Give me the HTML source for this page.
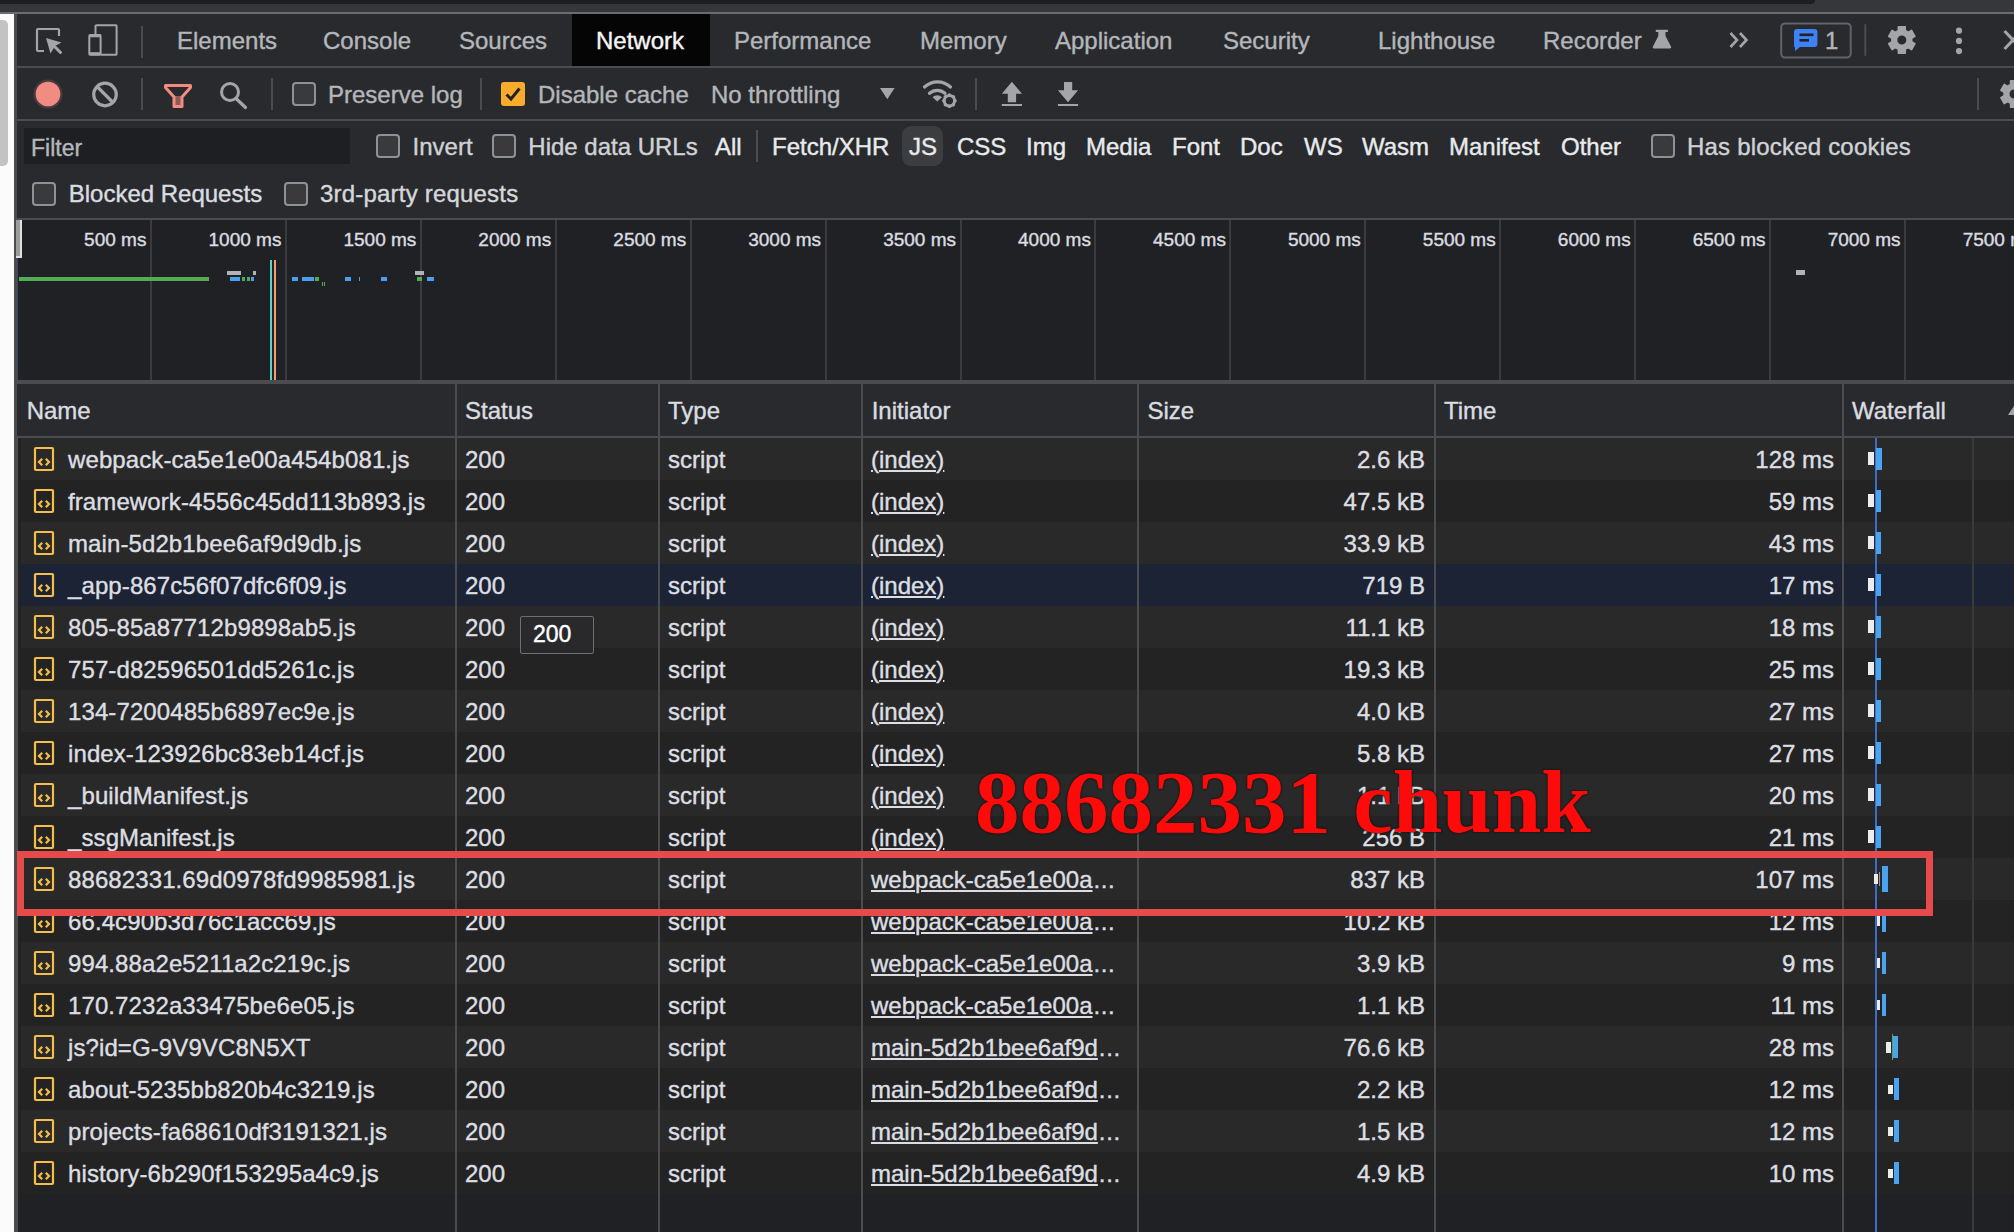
<!DOCTYPE html>
<html><head><meta charset="utf-8"><style>
html,body{margin:0;padding:0;}
body{width:2014px;height:1232px;overflow:hidden;position:relative;background:#202124;font-family:"Liberation Sans", sans-serif;}
.t{position:absolute;white-space:nowrap;-webkit-text-stroke:0.4px currentColor;}
.r{position:absolute;}
</style></head><body>
<div class="r" style="left:0px;top:0px;width:2014px;height:12px;background:#36373b;"></div>
<div class="r" style="left:0px;top:0px;width:1815px;height:4px;background:#1d1e21;border-radius:0 0 14px 0"></div>
<div class="r" style="left:0px;top:12px;width:2014px;height:2px;background:#6b6c70;"></div>
<div class="r" style="left:0px;top:14px;width:14px;height:1218px;background:#fbfbfb;"></div>
<div class="r" style="left:0px;top:20px;width:8px;height:146px;background:#c3c3c3;border-radius:0 5px 5px 0"></div>
<div class="r" style="left:14px;top:14px;width:4px;height:1218px;background:#4b4b4e;"></div>
<div class="r" style="left:17px;top:14px;width:1997px;height:52px;background:#292a2d;"></div>
<div class="r" style="left:17px;top:66px;width:1997px;height:2px;background:#4b4c50;"></div>
<div class="r" style="left:572px;top:14px;width:138px;height:52px;background:#050505;"></div>
<div class="t" style="left:177.0px;top:29.0px;font-size:24px;line-height:24px;color:#b3b6ba;font-family:'Liberation Sans', sans-serif;font-weight:normal;">Elements</div>
<div class="t" style="left:323.0px;top:29.0px;font-size:24px;line-height:24px;color:#b3b6ba;font-family:'Liberation Sans', sans-serif;font-weight:normal;">Console</div>
<div class="t" style="left:459.0px;top:29.0px;font-size:24px;line-height:24px;color:#b3b6ba;font-family:'Liberation Sans', sans-serif;font-weight:normal;">Sources</div>
<div class="t" style="left:596.0px;top:29.0px;font-size:24px;line-height:24px;color:#f5f5f5;font-family:'Liberation Sans', sans-serif;font-weight:normal;">Network</div>
<div class="t" style="left:734.0px;top:29.0px;font-size:24px;line-height:24px;color:#b3b6ba;font-family:'Liberation Sans', sans-serif;font-weight:normal;">Performance</div>
<div class="t" style="left:920.0px;top:29.0px;font-size:24px;line-height:24px;color:#b3b6ba;font-family:'Liberation Sans', sans-serif;font-weight:normal;">Memory</div>
<div class="t" style="left:1055.0px;top:29.0px;font-size:24px;line-height:24px;color:#b3b6ba;font-family:'Liberation Sans', sans-serif;font-weight:normal;">Application</div>
<div class="t" style="left:1223.0px;top:29.0px;font-size:24px;line-height:24px;color:#b3b6ba;font-family:'Liberation Sans', sans-serif;font-weight:normal;">Security</div>
<div class="t" style="left:1378.0px;top:29.0px;font-size:24px;line-height:24px;color:#b3b6ba;font-family:'Liberation Sans', sans-serif;font-weight:normal;">Lighthouse</div>
<div class="t" style="left:1543.0px;top:29.0px;font-size:24px;line-height:24px;color:#b3b6ba;font-family:'Liberation Sans', sans-serif;font-weight:normal;">Recorder</div>
<div class="r" style="left:141px;top:26px;width:2px;height:32px;background:#4b4c50;"></div>
<div class="r" style="left:17px;top:68px;width:1997px;height:51px;background:#292a2d;"></div>
<div class="r" style="left:17px;top:119px;width:1997px;height:2px;background:#4b4c50;"></div>
<div class="t" style="left:328.0px;top:82.9px;font-size:24px;line-height:24px;color:#b3b6ba;font-family:'Liberation Sans', sans-serif;font-weight:normal;">Preserve log</div>
<div class="t" style="left:538.0px;top:82.9px;font-size:24px;line-height:24px;color:#b3b6ba;font-family:'Liberation Sans', sans-serif;font-weight:normal;">Disable cache</div>
<div class="t" style="left:711.0px;top:82.9px;font-size:24px;line-height:24px;color:#b3b6ba;font-family:'Liberation Sans', sans-serif;font-weight:normal;">No throttling</div>
<div class="r" style="left:141px;top:78px;width:2px;height:32px;background:#4b4c50;"></div>
<div class="r" style="left:271px;top:78px;width:2px;height:32px;background:#4b4c50;"></div>
<div class="r" style="left:480px;top:78px;width:2px;height:32px;background:#4b4c50;"></div>
<div class="r" style="left:975px;top:78px;width:2px;height:32px;background:#4b4c50;"></div>
<div class="r" style="left:1977px;top:78px;width:2px;height:32px;background:#4b4c50;"></div>
<div class="r" style="left:17px;top:121px;width:1997px;height:97px;background:#292a2d;"></div>
<div class="r" style="left:17px;top:218px;width:1997px;height:2px;background:#4b4c50;"></div>
<div class="r" style="left:24px;top:128px;width:326px;height:36px;background:#1e1f22;"></div>
<div class="t" style="left:31.0px;top:137.1px;font-size:23px;line-height:23px;color:#b4b8bc;font-family:'Liberation Sans', sans-serif;font-weight:normal;">Filter</div>
<div class="t" style="left:412.6px;top:135.2px;font-size:24px;line-height:24px;color:#cfd2d6;font-family:'Liberation Sans', sans-serif;font-weight:normal;">Invert</div>
<div class="t" style="left:528.3px;top:135.2px;font-size:24px;line-height:24px;color:#cfd2d6;font-family:'Liberation Sans', sans-serif;font-weight:normal;">Hide data URLs</div>
<div class="r" style="left:756px;top:130px;width:2px;height:32px;background:#4b4c50;"></div>
<div class="r" style="left:902px;top:126px;width:41px;height:40px;background:#3c3d41;border-radius:9px"></div>
<div class="t" style="left:715.0px;top:135.2px;font-size:24px;line-height:24px;color:#e8eaed;font-family:'Liberation Sans', sans-serif;font-weight:normal;">All</div>
<div class="t" style="left:772.0px;top:135.2px;font-size:24px;line-height:24px;color:#e8eaed;font-family:'Liberation Sans', sans-serif;font-weight:normal;">Fetch/XHR</div>
<div class="t" style="left:909.0px;top:135.2px;font-size:24px;line-height:24px;color:#e8eaed;font-family:'Liberation Sans', sans-serif;font-weight:normal;">JS</div>
<div class="t" style="left:957.0px;top:135.2px;font-size:24px;line-height:24px;color:#e8eaed;font-family:'Liberation Sans', sans-serif;font-weight:normal;">CSS</div>
<div class="t" style="left:1026.0px;top:135.2px;font-size:24px;line-height:24px;color:#e8eaed;font-family:'Liberation Sans', sans-serif;font-weight:normal;">Img</div>
<div class="t" style="left:1086.0px;top:135.2px;font-size:24px;line-height:24px;color:#e8eaed;font-family:'Liberation Sans', sans-serif;font-weight:normal;">Media</div>
<div class="t" style="left:1172.0px;top:135.2px;font-size:24px;line-height:24px;color:#e8eaed;font-family:'Liberation Sans', sans-serif;font-weight:normal;">Font</div>
<div class="t" style="left:1240.0px;top:135.2px;font-size:24px;line-height:24px;color:#e8eaed;font-family:'Liberation Sans', sans-serif;font-weight:normal;">Doc</div>
<div class="t" style="left:1304.0px;top:135.2px;font-size:24px;line-height:24px;color:#e8eaed;font-family:'Liberation Sans', sans-serif;font-weight:normal;">WS</div>
<div class="t" style="left:1362.0px;top:135.2px;font-size:24px;line-height:24px;color:#e8eaed;font-family:'Liberation Sans', sans-serif;font-weight:normal;">Wasm</div>
<div class="t" style="left:1449.0px;top:135.2px;font-size:24px;line-height:24px;color:#e8eaed;font-family:'Liberation Sans', sans-serif;font-weight:normal;">Manifest</div>
<div class="t" style="left:1561.0px;top:135.2px;font-size:24px;line-height:24px;color:#e8eaed;font-family:'Liberation Sans', sans-serif;font-weight:normal;">Other</div>
<div class="t" style="left:1687.0px;top:135.2px;font-size:24px;line-height:24px;color:#cfd2d6;font-family:'Liberation Sans', sans-serif;font-weight:normal;letter-spacing:0.2px">Has blocked cookies</div>
<div class="t" style="left:68.7px;top:182.4px;font-size:24px;line-height:24px;color:#dadce0;font-family:'Liberation Sans', sans-serif;font-weight:normal;">Blocked Requests</div>
<div class="t" style="left:320.0px;top:182.4px;font-size:24px;line-height:24px;color:#d5d7db;font-family:'Liberation Sans', sans-serif;font-weight:normal;letter-spacing:0.2px">3rd-party requests</div>
<div class="r" style="left:292px;top:82px;width:20px;height:20px;background:#3a3a3c;border:2px solid #8e9196;border-radius:4px"></div>
<div class="r" style="left:501px;top:82px;width:24px;height:24px;background:#f9ab2e;border-radius:3px"></div>
<svg class="r" style="left:501px;top:82px" width="24" height="24" viewBox="0 0 24 24"><path d="M5.5 12.5 L10 17 L18.5 6.5" fill="none" stroke="#202124" stroke-width="3"/></svg>
<div class="r" style="left:376px;top:134px;width:20px;height:20px;background:#3a3a3c;border:2px solid #8e9196;border-radius:4px"></div>
<div class="r" style="left:492px;top:134px;width:20px;height:20px;background:#3a3a3c;border:2px solid #8e9196;border-radius:4px"></div>
<div class="r" style="left:1651px;top:134px;width:20px;height:20px;background:#3a3a3c;border:2px solid #8e9196;border-radius:4px"></div>
<div class="r" style="left:32px;top:182px;width:20px;height:20px;background:#3a3a3c;border:2px solid #8e9196;border-radius:4px"></div>
<div class="r" style="left:284px;top:182px;width:20px;height:20px;background:#3a3a3c;border:2px solid #8e9196;border-radius:4px"></div>
<div class="r" style="left:17px;top:220px;width:1997px;height:160px;background:#202124;"></div>
<div class="r" style="left:150px;top:220px;width:2px;height:160px;background:#3a3b3e;"></div>
<div class="t" style="left:-1053.6px;width:1200px;text-align:right;top:229.9px;font-size:19px;line-height:19px;color:#dadce0;">500 ms</div>
<div class="r" style="left:285px;top:220px;width:2px;height:160px;background:#3a3b3e;"></div>
<div class="t" style="left:-918.6px;width:1200px;text-align:right;top:229.9px;font-size:19px;line-height:19px;color:#dadce0;">1000 ms</div>
<div class="r" style="left:420px;top:220px;width:2px;height:160px;background:#3a3b3e;"></div>
<div class="t" style="left:-783.7px;width:1200px;text-align:right;top:229.9px;font-size:19px;line-height:19px;color:#dadce0;">1500 ms</div>
<div class="r" style="left:555px;top:220px;width:2px;height:160px;background:#3a3b3e;"></div>
<div class="t" style="left:-648.8px;width:1200px;text-align:right;top:229.9px;font-size:19px;line-height:19px;color:#dadce0;">2000 ms</div>
<div class="r" style="left:690px;top:220px;width:2px;height:160px;background:#3a3b3e;"></div>
<div class="t" style="left:-513.8px;width:1200px;text-align:right;top:229.9px;font-size:19px;line-height:19px;color:#dadce0;">2500 ms</div>
<div class="r" style="left:825px;top:220px;width:2px;height:160px;background:#3a3b3e;"></div>
<div class="t" style="left:-378.9px;width:1200px;text-align:right;top:229.9px;font-size:19px;line-height:19px;color:#dadce0;">3000 ms</div>
<div class="r" style="left:960px;top:220px;width:2px;height:160px;background:#3a3b3e;"></div>
<div class="t" style="left:-244.0px;width:1200px;text-align:right;top:229.9px;font-size:19px;line-height:19px;color:#dadce0;">3500 ms</div>
<div class="r" style="left:1094px;top:220px;width:2px;height:160px;background:#3a3b3e;"></div>
<div class="t" style="left:-109.1px;width:1200px;text-align:right;top:229.9px;font-size:19px;line-height:19px;color:#dadce0;">4000 ms</div>
<div class="r" style="left:1229px;top:220px;width:2px;height:160px;background:#3a3b3e;"></div>
<div class="t" style="left:25.9px;width:1200px;text-align:right;top:229.9px;font-size:19px;line-height:19px;color:#dadce0;">4500 ms</div>
<div class="r" style="left:1364px;top:220px;width:2px;height:160px;background:#3a3b3e;"></div>
<div class="t" style="left:160.8px;width:1200px;text-align:right;top:229.9px;font-size:19px;line-height:19px;color:#dadce0;">5000 ms</div>
<div class="r" style="left:1499px;top:220px;width:2px;height:160px;background:#3a3b3e;"></div>
<div class="t" style="left:295.7px;width:1200px;text-align:right;top:229.9px;font-size:19px;line-height:19px;color:#dadce0;">5500 ms</div>
<div class="r" style="left:1634px;top:220px;width:2px;height:160px;background:#3a3b3e;"></div>
<div class="t" style="left:430.7px;width:1200px;text-align:right;top:229.9px;font-size:19px;line-height:19px;color:#dadce0;">6000 ms</div>
<div class="r" style="left:1769px;top:220px;width:2px;height:160px;background:#3a3b3e;"></div>
<div class="t" style="left:565.6px;width:1200px;text-align:right;top:229.9px;font-size:19px;line-height:19px;color:#dadce0;">6500 ms</div>
<div class="r" style="left:1904px;top:220px;width:2px;height:160px;background:#3a3b3e;"></div>
<div class="t" style="left:700.5px;width:1200px;text-align:right;top:229.9px;font-size:19px;line-height:19px;color:#dadce0;">7000 ms</div>
<div class="r" style="left:2039px;top:220px;width:2px;height:160px;background:#3a3b3e;"></div>
<div class="t" style="left:835.5px;width:1200px;text-align:right;top:229.9px;font-size:19px;line-height:19px;color:#dadce0;">7500 ms</div>
<div class="r" style="left:17px;top:258px;width:1px;height:122px;background:#3a4560;"></div>
<div class="r" style="left:16px;top:220px;width:6px;height:38px;background:#e0e0e0;"></div>
<div class="r" style="left:16px;top:220px;width:4px;height:36px;background:#9c9c9c;"></div>
<div class="r" style="left:19px;top:277px;width:190px;height:4px;background:#55aa55;"></div>
<div class="r" style="left:227px;top:271px;width:14px;height:4px;background:#b3b3b3;"></div>
<div class="r" style="left:253px;top:271px;width:3px;height:4px;background:#b3b3b3;"></div>
<div class="r" style="left:415px;top:271px;width:9px;height:4px;background:#b3b3b3;"></div>
<div class="r" style="left:230px;top:277px;width:10px;height:4px;background:#4a9ff0;"></div>
<div class="r" style="left:251px;top:277px;width:2.5px;height:4px;background:#4a9ff0;"></div>
<div class="r" style="left:292px;top:277px;width:5.5px;height:4px;background:#4a9ff0;"></div>
<div class="r" style="left:302px;top:277px;width:12px;height:4px;background:#4a9ff0;"></div>
<div class="r" style="left:345px;top:277px;width:6px;height:4px;background:#4a9ff0;"></div>
<div class="r" style="left:381px;top:277px;width:6px;height:4px;background:#4a9ff0;"></div>
<div class="r" style="left:427px;top:277px;width:6.5px;height:4px;background:#4a9ff0;"></div>
<div class="r" style="left:359px;top:277px;width:1px;height:4px;background:#4a9ff0;"></div>
<div class="r" style="left:241.5px;top:277px;width:3.1999999999999886px;height:4px;background:#55aa55;"></div>
<div class="r" style="left:246.5px;top:277px;width:3.0999999999999943px;height:4px;background:#55aa55;"></div>
<div class="r" style="left:315.4px;top:277px;width:3.8000000000000114px;height:4px;background:#55aa55;"></div>
<div class="r" style="left:416.6px;top:277px;width:5.0px;height:4px;background:#55aa55;"></div>
<div class="r" style="left:322px;top:282px;width:1px;height:4px;background:#55aa55;"></div>
<div class="r" style="left:324px;top:282px;width:1px;height:4px;background:#55aa55;"></div>
<div class="r" style="left:270px;top:260px;width:2px;height:120px;background:#5fd0c4;"></div>
<div class="r" style="left:274px;top:260px;width:2px;height:120px;background:#f0a070;"></div>
<div class="r" style="left:1796px;top:270px;width:9px;height:5px;background:#b3b3b3;"></div>
<div class="r" style="left:17px;top:380px;width:1997px;height:4px;background:#4b4c50;"></div>
<div class="r" style="left:17px;top:384px;width:1997px;height:52px;background:#292a2d;"></div>
<div class="r" style="left:17px;top:436px;width:1997px;height:2px;background:#4b4c50;"></div>
<div class="t" style="left:26.7px;top:398.6px;font-size:24px;line-height:24px;color:#dadce0;font-family:'Liberation Sans', sans-serif;font-weight:normal;">Name</div>
<div class="t" style="left:465.0px;top:398.6px;font-size:24px;line-height:24px;color:#dadce0;font-family:'Liberation Sans', sans-serif;font-weight:normal;">Status</div>
<div class="t" style="left:668.0px;top:398.6px;font-size:24px;line-height:24px;color:#dadce0;font-family:'Liberation Sans', sans-serif;font-weight:normal;">Type</div>
<div class="t" style="left:871.7px;top:398.6px;font-size:24px;line-height:24px;color:#dadce0;font-family:'Liberation Sans', sans-serif;font-weight:normal;">Initiator</div>
<div class="t" style="left:1147.5px;top:398.6px;font-size:24px;line-height:24px;color:#dadce0;font-family:'Liberation Sans', sans-serif;font-weight:normal;">Size</div>
<div class="t" style="left:1444.0px;top:398.6px;font-size:24px;line-height:24px;color:#dadce0;font-family:'Liberation Sans', sans-serif;font-weight:normal;">Time</div>
<div class="t" style="left:1852.0px;top:398.6px;font-size:24px;line-height:24px;color:#dadce0;font-family:'Liberation Sans', sans-serif;font-weight:normal;">Waterfall</div>
<div class="r" style="left:17px;top:438px;width:1997px;height:794px;background:#202124;"></div>
<div class="r" style="left:17px;top:438px;width:1997px;height:42px;background:#292929;"></div>
<div class="r" style="left:17px;top:480px;width:1997px;height:42px;background:#232323;"></div>
<div class="r" style="left:17px;top:522px;width:1997px;height:42px;background:#292929;"></div>
<div class="r" style="left:17px;top:564px;width:1997px;height:42px;background:#1b2335;"></div>
<div class="r" style="left:17px;top:606px;width:1997px;height:42px;background:#292929;"></div>
<div class="r" style="left:17px;top:648px;width:1997px;height:42px;background:#232323;"></div>
<div class="r" style="left:17px;top:690px;width:1997px;height:42px;background:#292929;"></div>
<div class="r" style="left:17px;top:732px;width:1997px;height:42px;background:#232323;"></div>
<div class="r" style="left:17px;top:774px;width:1997px;height:42px;background:#292929;"></div>
<div class="r" style="left:17px;top:816px;width:1997px;height:42px;background:#232323;"></div>
<div class="r" style="left:17px;top:858px;width:1997px;height:42px;background:#292929;"></div>
<div class="r" style="left:17px;top:900px;width:1997px;height:42px;background:#232323;"></div>
<div class="r" style="left:17px;top:942px;width:1997px;height:42px;background:#292929;"></div>
<div class="r" style="left:17px;top:984px;width:1997px;height:42px;background:#232323;"></div>
<div class="r" style="left:17px;top:1026px;width:1997px;height:42px;background:#292929;"></div>
<div class="r" style="left:17px;top:1068px;width:1997px;height:42px;background:#232323;"></div>
<div class="r" style="left:17px;top:1110px;width:1997px;height:42px;background:#292929;"></div>
<div class="r" style="left:17px;top:1152px;width:1997px;height:42px;background:#232323;"></div>
<div class="r" style="left:14px;top:438px;width:4px;height:794px;background:#4b4b4e;"></div>
<div class="r" style="left:18px;top:438px;width:3px;height:794px;background:#222225;"></div>
<div class="r" style="left:455px;top:384px;width:2px;height:848px;background:#4b4c50;"></div>
<div class="r" style="left:658px;top:384px;width:2px;height:848px;background:#4b4c50;"></div>
<div class="r" style="left:861px;top:384px;width:2px;height:848px;background:#4b4c50;"></div>
<div class="r" style="left:1137px;top:384px;width:2px;height:848px;background:#4b4c50;"></div>
<div class="r" style="left:1434px;top:384px;width:2px;height:848px;background:#4b4c50;"></div>
<div class="r" style="left:1842px;top:384px;width:2px;height:848px;background:#4b4c50;"></div>
<div class="r" style="left:1972px;top:438px;width:2px;height:794px;background:#3a3a3a;"></div>
<div class="r" style="left:1875px;top:438px;width:2px;height:794px;background:#3d6fc8;"></div>
<svg class="r" style="left:33px;top:446px" width="22" height="26" viewBox="0 0 22 26"><rect x="2" y="2" width="18" height="22" rx="1" fill="none" stroke="#f5bd4a" stroke-width="2.2"/><path d="M9.2 12.8 L6 16 L9.2 19.2 M12.8 12.8 L16 16 L12.8 19.2" fill="none" stroke="#f5bd4a" stroke-width="2.2"/></svg>
<div class="t" style="left:68.0px;top:447.7px;font-size:24px;line-height:24px;color:#dcdee2;font-family:'Liberation Sans', sans-serif;font-weight:normal;letter-spacing:0.1px">webpack-ca5e1e00a454b081.js</div>
<div class="t" style="left:465.0px;top:447.7px;font-size:24px;line-height:24px;color:#dcdee2;font-family:'Liberation Sans', sans-serif;font-weight:normal;">200</div>
<div class="t" style="left:668.0px;top:447.7px;font-size:24px;line-height:24px;color:#dcdee2;font-family:'Liberation Sans', sans-serif;font-weight:normal;">script</div>
<div class="t" style="left:871.0px;top:447.7px;font-size:24px;line-height:24px;color:#dcdee2;font-family:'Liberation Sans', sans-serif;font-weight:normal;text-decoration:underline;text-decoration-thickness:1.6px;text-underline-offset:2px">(index)</div>
<div class="t" style="left:225.0px;width:1200px;text-align:right;top:447.7px;font-size:24px;line-height:24px;color:#dcdee2;">2.6 kB</div>
<div class="t" style="left:634.0px;width:1200px;text-align:right;top:447.7px;font-size:24px;line-height:24px;color:#dcdee2;">128 ms</div>
<svg class="r" style="left:33px;top:488px" width="22" height="26" viewBox="0 0 22 26"><rect x="2" y="2" width="18" height="22" rx="1" fill="none" stroke="#f5bd4a" stroke-width="2.2"/><path d="M9.2 12.8 L6 16 L9.2 19.2 M12.8 12.8 L16 16 L12.8 19.2" fill="none" stroke="#f5bd4a" stroke-width="2.2"/></svg>
<div class="t" style="left:68.0px;top:489.7px;font-size:24px;line-height:24px;color:#dcdee2;font-family:'Liberation Sans', sans-serif;font-weight:normal;letter-spacing:0.1px">framework-4556c45dd113b893.js</div>
<div class="t" style="left:465.0px;top:489.7px;font-size:24px;line-height:24px;color:#dcdee2;font-family:'Liberation Sans', sans-serif;font-weight:normal;">200</div>
<div class="t" style="left:668.0px;top:489.7px;font-size:24px;line-height:24px;color:#dcdee2;font-family:'Liberation Sans', sans-serif;font-weight:normal;">script</div>
<div class="t" style="left:871.0px;top:489.7px;font-size:24px;line-height:24px;color:#dcdee2;font-family:'Liberation Sans', sans-serif;font-weight:normal;text-decoration:underline;text-decoration-thickness:1.6px;text-underline-offset:2px">(index)</div>
<div class="t" style="left:225.0px;width:1200px;text-align:right;top:489.7px;font-size:24px;line-height:24px;color:#dcdee2;">47.5 kB</div>
<div class="t" style="left:634.0px;width:1200px;text-align:right;top:489.7px;font-size:24px;line-height:24px;color:#dcdee2;">59 ms</div>
<svg class="r" style="left:33px;top:530px" width="22" height="26" viewBox="0 0 22 26"><rect x="2" y="2" width="18" height="22" rx="1" fill="none" stroke="#f5bd4a" stroke-width="2.2"/><path d="M9.2 12.8 L6 16 L9.2 19.2 M12.8 12.8 L16 16 L12.8 19.2" fill="none" stroke="#f5bd4a" stroke-width="2.2"/></svg>
<div class="t" style="left:68.0px;top:531.7px;font-size:24px;line-height:24px;color:#dcdee2;font-family:'Liberation Sans', sans-serif;font-weight:normal;letter-spacing:0.1px">main-5d2b1bee6af9d9db.js</div>
<div class="t" style="left:465.0px;top:531.7px;font-size:24px;line-height:24px;color:#dcdee2;font-family:'Liberation Sans', sans-serif;font-weight:normal;">200</div>
<div class="t" style="left:668.0px;top:531.7px;font-size:24px;line-height:24px;color:#dcdee2;font-family:'Liberation Sans', sans-serif;font-weight:normal;">script</div>
<div class="t" style="left:871.0px;top:531.7px;font-size:24px;line-height:24px;color:#dcdee2;font-family:'Liberation Sans', sans-serif;font-weight:normal;text-decoration:underline;text-decoration-thickness:1.6px;text-underline-offset:2px">(index)</div>
<div class="t" style="left:225.0px;width:1200px;text-align:right;top:531.7px;font-size:24px;line-height:24px;color:#dcdee2;">33.9 kB</div>
<div class="t" style="left:634.0px;width:1200px;text-align:right;top:531.7px;font-size:24px;line-height:24px;color:#dcdee2;">43 ms</div>
<svg class="r" style="left:33px;top:572px" width="22" height="26" viewBox="0 0 22 26"><rect x="2" y="2" width="18" height="22" rx="1" fill="none" stroke="#f5bd4a" stroke-width="2.2"/><path d="M9.2 12.8 L6 16 L9.2 19.2 M12.8 12.8 L16 16 L12.8 19.2" fill="none" stroke="#f5bd4a" stroke-width="2.2"/></svg>
<div class="t" style="left:68.0px;top:573.7px;font-size:24px;line-height:24px;color:#dcdee2;font-family:'Liberation Sans', sans-serif;font-weight:normal;letter-spacing:0.1px">_app-867c56f07dfc6f09.js</div>
<div class="t" style="left:465.0px;top:573.7px;font-size:24px;line-height:24px;color:#dcdee2;font-family:'Liberation Sans', sans-serif;font-weight:normal;">200</div>
<div class="t" style="left:668.0px;top:573.7px;font-size:24px;line-height:24px;color:#dcdee2;font-family:'Liberation Sans', sans-serif;font-weight:normal;">script</div>
<div class="t" style="left:871.0px;top:573.7px;font-size:24px;line-height:24px;color:#dcdee2;font-family:'Liberation Sans', sans-serif;font-weight:normal;text-decoration:underline;text-decoration-thickness:1.6px;text-underline-offset:2px">(index)</div>
<div class="t" style="left:225.0px;width:1200px;text-align:right;top:573.7px;font-size:24px;line-height:24px;color:#dcdee2;">719 B</div>
<div class="t" style="left:634.0px;width:1200px;text-align:right;top:573.7px;font-size:24px;line-height:24px;color:#dcdee2;">17 ms</div>
<svg class="r" style="left:33px;top:614px" width="22" height="26" viewBox="0 0 22 26"><rect x="2" y="2" width="18" height="22" rx="1" fill="none" stroke="#f5bd4a" stroke-width="2.2"/><path d="M9.2 12.8 L6 16 L9.2 19.2 M12.8 12.8 L16 16 L12.8 19.2" fill="none" stroke="#f5bd4a" stroke-width="2.2"/></svg>
<div class="t" style="left:68.0px;top:615.7px;font-size:24px;line-height:24px;color:#dcdee2;font-family:'Liberation Sans', sans-serif;font-weight:normal;letter-spacing:0.1px">805-85a87712b9898ab5.js</div>
<div class="t" style="left:465.0px;top:615.7px;font-size:24px;line-height:24px;color:#dcdee2;font-family:'Liberation Sans', sans-serif;font-weight:normal;">200</div>
<div class="t" style="left:668.0px;top:615.7px;font-size:24px;line-height:24px;color:#dcdee2;font-family:'Liberation Sans', sans-serif;font-weight:normal;">script</div>
<div class="t" style="left:871.0px;top:615.7px;font-size:24px;line-height:24px;color:#dcdee2;font-family:'Liberation Sans', sans-serif;font-weight:normal;text-decoration:underline;text-decoration-thickness:1.6px;text-underline-offset:2px">(index)</div>
<div class="t" style="left:225.0px;width:1200px;text-align:right;top:615.7px;font-size:24px;line-height:24px;color:#dcdee2;">11.1 kB</div>
<div class="t" style="left:634.0px;width:1200px;text-align:right;top:615.7px;font-size:24px;line-height:24px;color:#dcdee2;">18 ms</div>
<svg class="r" style="left:33px;top:656px" width="22" height="26" viewBox="0 0 22 26"><rect x="2" y="2" width="18" height="22" rx="1" fill="none" stroke="#f5bd4a" stroke-width="2.2"/><path d="M9.2 12.8 L6 16 L9.2 19.2 M12.8 12.8 L16 16 L12.8 19.2" fill="none" stroke="#f5bd4a" stroke-width="2.2"/></svg>
<div class="t" style="left:68.0px;top:657.7px;font-size:24px;line-height:24px;color:#dcdee2;font-family:'Liberation Sans', sans-serif;font-weight:normal;letter-spacing:0.1px">757-d82596501dd5261c.js</div>
<div class="t" style="left:465.0px;top:657.7px;font-size:24px;line-height:24px;color:#dcdee2;font-family:'Liberation Sans', sans-serif;font-weight:normal;">200</div>
<div class="t" style="left:668.0px;top:657.7px;font-size:24px;line-height:24px;color:#dcdee2;font-family:'Liberation Sans', sans-serif;font-weight:normal;">script</div>
<div class="t" style="left:871.0px;top:657.7px;font-size:24px;line-height:24px;color:#dcdee2;font-family:'Liberation Sans', sans-serif;font-weight:normal;text-decoration:underline;text-decoration-thickness:1.6px;text-underline-offset:2px">(index)</div>
<div class="t" style="left:225.0px;width:1200px;text-align:right;top:657.7px;font-size:24px;line-height:24px;color:#dcdee2;">19.3 kB</div>
<div class="t" style="left:634.0px;width:1200px;text-align:right;top:657.7px;font-size:24px;line-height:24px;color:#dcdee2;">25 ms</div>
<svg class="r" style="left:33px;top:698px" width="22" height="26" viewBox="0 0 22 26"><rect x="2" y="2" width="18" height="22" rx="1" fill="none" stroke="#f5bd4a" stroke-width="2.2"/><path d="M9.2 12.8 L6 16 L9.2 19.2 M12.8 12.8 L16 16 L12.8 19.2" fill="none" stroke="#f5bd4a" stroke-width="2.2"/></svg>
<div class="t" style="left:68.0px;top:699.7px;font-size:24px;line-height:24px;color:#dcdee2;font-family:'Liberation Sans', sans-serif;font-weight:normal;letter-spacing:0.1px">134-7200485b6897ec9e.js</div>
<div class="t" style="left:465.0px;top:699.7px;font-size:24px;line-height:24px;color:#dcdee2;font-family:'Liberation Sans', sans-serif;font-weight:normal;">200</div>
<div class="t" style="left:668.0px;top:699.7px;font-size:24px;line-height:24px;color:#dcdee2;font-family:'Liberation Sans', sans-serif;font-weight:normal;">script</div>
<div class="t" style="left:871.0px;top:699.7px;font-size:24px;line-height:24px;color:#dcdee2;font-family:'Liberation Sans', sans-serif;font-weight:normal;text-decoration:underline;text-decoration-thickness:1.6px;text-underline-offset:2px">(index)</div>
<div class="t" style="left:225.0px;width:1200px;text-align:right;top:699.7px;font-size:24px;line-height:24px;color:#dcdee2;">4.0 kB</div>
<div class="t" style="left:634.0px;width:1200px;text-align:right;top:699.7px;font-size:24px;line-height:24px;color:#dcdee2;">27 ms</div>
<svg class="r" style="left:33px;top:740px" width="22" height="26" viewBox="0 0 22 26"><rect x="2" y="2" width="18" height="22" rx="1" fill="none" stroke="#f5bd4a" stroke-width="2.2"/><path d="M9.2 12.8 L6 16 L9.2 19.2 M12.8 12.8 L16 16 L12.8 19.2" fill="none" stroke="#f5bd4a" stroke-width="2.2"/></svg>
<div class="t" style="left:68.0px;top:741.7px;font-size:24px;line-height:24px;color:#dcdee2;font-family:'Liberation Sans', sans-serif;font-weight:normal;letter-spacing:0.1px">index-123926bc83eb14cf.js</div>
<div class="t" style="left:465.0px;top:741.7px;font-size:24px;line-height:24px;color:#dcdee2;font-family:'Liberation Sans', sans-serif;font-weight:normal;">200</div>
<div class="t" style="left:668.0px;top:741.7px;font-size:24px;line-height:24px;color:#dcdee2;font-family:'Liberation Sans', sans-serif;font-weight:normal;">script</div>
<div class="t" style="left:871.0px;top:741.7px;font-size:24px;line-height:24px;color:#dcdee2;font-family:'Liberation Sans', sans-serif;font-weight:normal;text-decoration:underline;text-decoration-thickness:1.6px;text-underline-offset:2px">(index)</div>
<div class="t" style="left:225.0px;width:1200px;text-align:right;top:741.7px;font-size:24px;line-height:24px;color:#dcdee2;">5.8 kB</div>
<div class="t" style="left:634.0px;width:1200px;text-align:right;top:741.7px;font-size:24px;line-height:24px;color:#dcdee2;">27 ms</div>
<svg class="r" style="left:33px;top:782px" width="22" height="26" viewBox="0 0 22 26"><rect x="2" y="2" width="18" height="22" rx="1" fill="none" stroke="#f5bd4a" stroke-width="2.2"/><path d="M9.2 12.8 L6 16 L9.2 19.2 M12.8 12.8 L16 16 L12.8 19.2" fill="none" stroke="#f5bd4a" stroke-width="2.2"/></svg>
<div class="t" style="left:68.0px;top:783.7px;font-size:24px;line-height:24px;color:#dcdee2;font-family:'Liberation Sans', sans-serif;font-weight:normal;letter-spacing:0.1px">_buildManifest.js</div>
<div class="t" style="left:465.0px;top:783.7px;font-size:24px;line-height:24px;color:#dcdee2;font-family:'Liberation Sans', sans-serif;font-weight:normal;">200</div>
<div class="t" style="left:668.0px;top:783.7px;font-size:24px;line-height:24px;color:#dcdee2;font-family:'Liberation Sans', sans-serif;font-weight:normal;">script</div>
<div class="t" style="left:871.0px;top:783.7px;font-size:24px;line-height:24px;color:#dcdee2;font-family:'Liberation Sans', sans-serif;font-weight:normal;text-decoration:underline;text-decoration-thickness:1.6px;text-underline-offset:2px">(index)</div>
<div class="t" style="left:225.0px;width:1200px;text-align:right;top:783.7px;font-size:24px;line-height:24px;color:#dcdee2;">1.1 kB</div>
<div class="t" style="left:634.0px;width:1200px;text-align:right;top:783.7px;font-size:24px;line-height:24px;color:#dcdee2;">20 ms</div>
<svg class="r" style="left:33px;top:824px" width="22" height="26" viewBox="0 0 22 26"><rect x="2" y="2" width="18" height="22" rx="1" fill="none" stroke="#f5bd4a" stroke-width="2.2"/><path d="M9.2 12.8 L6 16 L9.2 19.2 M12.8 12.8 L16 16 L12.8 19.2" fill="none" stroke="#f5bd4a" stroke-width="2.2"/></svg>
<div class="t" style="left:68.0px;top:825.7px;font-size:24px;line-height:24px;color:#dcdee2;font-family:'Liberation Sans', sans-serif;font-weight:normal;letter-spacing:0.1px">_ssgManifest.js</div>
<div class="t" style="left:465.0px;top:825.7px;font-size:24px;line-height:24px;color:#dcdee2;font-family:'Liberation Sans', sans-serif;font-weight:normal;">200</div>
<div class="t" style="left:668.0px;top:825.7px;font-size:24px;line-height:24px;color:#dcdee2;font-family:'Liberation Sans', sans-serif;font-weight:normal;">script</div>
<div class="t" style="left:871.0px;top:825.7px;font-size:24px;line-height:24px;color:#dcdee2;font-family:'Liberation Sans', sans-serif;font-weight:normal;text-decoration:underline;text-decoration-thickness:1.6px;text-underline-offset:2px">(index)</div>
<div class="t" style="left:225.0px;width:1200px;text-align:right;top:825.7px;font-size:24px;line-height:24px;color:#dcdee2;">256 B</div>
<div class="t" style="left:634.0px;width:1200px;text-align:right;top:825.7px;font-size:24px;line-height:24px;color:#dcdee2;">21 ms</div>
<svg class="r" style="left:33px;top:866px" width="22" height="26" viewBox="0 0 22 26"><rect x="2" y="2" width="18" height="22" rx="1" fill="none" stroke="#f5bd4a" stroke-width="2.2"/><path d="M9.2 12.8 L6 16 L9.2 19.2 M12.8 12.8 L16 16 L12.8 19.2" fill="none" stroke="#f5bd4a" stroke-width="2.2"/></svg>
<div class="t" style="left:68.0px;top:867.7px;font-size:24px;line-height:24px;color:#dcdee2;font-family:'Liberation Sans', sans-serif;font-weight:normal;letter-spacing:0.1px">88682331.69d0978fd9985981.js</div>
<div class="t" style="left:465.0px;top:867.7px;font-size:24px;line-height:24px;color:#dcdee2;font-family:'Liberation Sans', sans-serif;font-weight:normal;">200</div>
<div class="t" style="left:668.0px;top:867.7px;font-size:24px;line-height:24px;color:#dcdee2;font-family:'Liberation Sans', sans-serif;font-weight:normal;">script</div>
<div class="t" style="left:871.0px;top:867.7px;font-size:24px;line-height:24px;color:#dcdee2;font-family:'Liberation Sans', sans-serif;font-weight:normal;"><span style="text-decoration:underline;text-decoration-thickness:1.6px;text-underline-offset:2px">webpack-ca5e1e00a</span><span style="letter-spacing:0.6px;margin-left:1px">...</span></div>
<div class="t" style="left:225.0px;width:1200px;text-align:right;top:867.7px;font-size:24px;line-height:24px;color:#dcdee2;">837 kB</div>
<div class="t" style="left:634.0px;width:1200px;text-align:right;top:867.7px;font-size:24px;line-height:24px;color:#dcdee2;">107 ms</div>
<svg class="r" style="left:33px;top:908px" width="22" height="26" viewBox="0 0 22 26"><rect x="2" y="2" width="18" height="22" rx="1" fill="none" stroke="#f5bd4a" stroke-width="2.2"/><path d="M9.2 12.8 L6 16 L9.2 19.2 M12.8 12.8 L16 16 L12.8 19.2" fill="none" stroke="#f5bd4a" stroke-width="2.2"/></svg>
<div class="t" style="left:68.0px;top:909.7px;font-size:24px;line-height:24px;color:#dcdee2;font-family:'Liberation Sans', sans-serif;font-weight:normal;letter-spacing:0.1px">66.4c90b3d76c1acc69.js</div>
<div class="t" style="left:465.0px;top:909.7px;font-size:24px;line-height:24px;color:#dcdee2;font-family:'Liberation Sans', sans-serif;font-weight:normal;">200</div>
<div class="t" style="left:668.0px;top:909.7px;font-size:24px;line-height:24px;color:#dcdee2;font-family:'Liberation Sans', sans-serif;font-weight:normal;">script</div>
<div class="t" style="left:871.0px;top:909.7px;font-size:24px;line-height:24px;color:#dcdee2;font-family:'Liberation Sans', sans-serif;font-weight:normal;"><span style="text-decoration:underline;text-decoration-thickness:1.6px;text-underline-offset:2px">webpack-ca5e1e00a</span><span style="letter-spacing:0.6px;margin-left:1px">...</span></div>
<div class="t" style="left:225.0px;width:1200px;text-align:right;top:909.7px;font-size:24px;line-height:24px;color:#dcdee2;">10.2 kB</div>
<div class="t" style="left:634.0px;width:1200px;text-align:right;top:909.7px;font-size:24px;line-height:24px;color:#dcdee2;">12 ms</div>
<svg class="r" style="left:33px;top:950px" width="22" height="26" viewBox="0 0 22 26"><rect x="2" y="2" width="18" height="22" rx="1" fill="none" stroke="#f5bd4a" stroke-width="2.2"/><path d="M9.2 12.8 L6 16 L9.2 19.2 M12.8 12.8 L16 16 L12.8 19.2" fill="none" stroke="#f5bd4a" stroke-width="2.2"/></svg>
<div class="t" style="left:68.0px;top:951.7px;font-size:24px;line-height:24px;color:#dcdee2;font-family:'Liberation Sans', sans-serif;font-weight:normal;letter-spacing:0.1px">994.88a2e5211a2c219c.js</div>
<div class="t" style="left:465.0px;top:951.7px;font-size:24px;line-height:24px;color:#dcdee2;font-family:'Liberation Sans', sans-serif;font-weight:normal;">200</div>
<div class="t" style="left:668.0px;top:951.7px;font-size:24px;line-height:24px;color:#dcdee2;font-family:'Liberation Sans', sans-serif;font-weight:normal;">script</div>
<div class="t" style="left:871.0px;top:951.7px;font-size:24px;line-height:24px;color:#dcdee2;font-family:'Liberation Sans', sans-serif;font-weight:normal;"><span style="text-decoration:underline;text-decoration-thickness:1.6px;text-underline-offset:2px">webpack-ca5e1e00a</span><span style="letter-spacing:0.6px;margin-left:1px">...</span></div>
<div class="t" style="left:225.0px;width:1200px;text-align:right;top:951.7px;font-size:24px;line-height:24px;color:#dcdee2;">3.9 kB</div>
<div class="t" style="left:634.0px;width:1200px;text-align:right;top:951.7px;font-size:24px;line-height:24px;color:#dcdee2;">9 ms</div>
<svg class="r" style="left:33px;top:992px" width="22" height="26" viewBox="0 0 22 26"><rect x="2" y="2" width="18" height="22" rx="1" fill="none" stroke="#f5bd4a" stroke-width="2.2"/><path d="M9.2 12.8 L6 16 L9.2 19.2 M12.8 12.8 L16 16 L12.8 19.2" fill="none" stroke="#f5bd4a" stroke-width="2.2"/></svg>
<div class="t" style="left:68.0px;top:993.7px;font-size:24px;line-height:24px;color:#dcdee2;font-family:'Liberation Sans', sans-serif;font-weight:normal;letter-spacing:0.1px">170.7232a33475be6e05.js</div>
<div class="t" style="left:465.0px;top:993.7px;font-size:24px;line-height:24px;color:#dcdee2;font-family:'Liberation Sans', sans-serif;font-weight:normal;">200</div>
<div class="t" style="left:668.0px;top:993.7px;font-size:24px;line-height:24px;color:#dcdee2;font-family:'Liberation Sans', sans-serif;font-weight:normal;">script</div>
<div class="t" style="left:871.0px;top:993.7px;font-size:24px;line-height:24px;color:#dcdee2;font-family:'Liberation Sans', sans-serif;font-weight:normal;"><span style="text-decoration:underline;text-decoration-thickness:1.6px;text-underline-offset:2px">webpack-ca5e1e00a</span><span style="letter-spacing:0.6px;margin-left:1px">...</span></div>
<div class="t" style="left:225.0px;width:1200px;text-align:right;top:993.7px;font-size:24px;line-height:24px;color:#dcdee2;">1.1 kB</div>
<div class="t" style="left:634.0px;width:1200px;text-align:right;top:993.7px;font-size:24px;line-height:24px;color:#dcdee2;">11 ms</div>
<svg class="r" style="left:33px;top:1034px" width="22" height="26" viewBox="0 0 22 26"><rect x="2" y="2" width="18" height="22" rx="1" fill="none" stroke="#f5bd4a" stroke-width="2.2"/><path d="M9.2 12.8 L6 16 L9.2 19.2 M12.8 12.8 L16 16 L12.8 19.2" fill="none" stroke="#f5bd4a" stroke-width="2.2"/></svg>
<div class="t" style="left:68.0px;top:1035.7px;font-size:24px;line-height:24px;color:#dcdee2;font-family:'Liberation Sans', sans-serif;font-weight:normal;letter-spacing:0.1px">js?id=G-9V9VC8N5XT</div>
<div class="t" style="left:465.0px;top:1035.7px;font-size:24px;line-height:24px;color:#dcdee2;font-family:'Liberation Sans', sans-serif;font-weight:normal;">200</div>
<div class="t" style="left:668.0px;top:1035.7px;font-size:24px;line-height:24px;color:#dcdee2;font-family:'Liberation Sans', sans-serif;font-weight:normal;">script</div>
<div class="t" style="left:871.0px;top:1035.7px;font-size:24px;line-height:24px;color:#dcdee2;font-family:'Liberation Sans', sans-serif;font-weight:normal;"><span style="text-decoration:underline;text-decoration-thickness:1.6px;text-underline-offset:2px">main-5d2b1bee6af9d</span><span style="letter-spacing:0.6px;margin-left:1px">...</span></div>
<div class="t" style="left:225.0px;width:1200px;text-align:right;top:1035.7px;font-size:24px;line-height:24px;color:#dcdee2;">76.6 kB</div>
<div class="t" style="left:634.0px;width:1200px;text-align:right;top:1035.7px;font-size:24px;line-height:24px;color:#dcdee2;">28 ms</div>
<svg class="r" style="left:33px;top:1076px" width="22" height="26" viewBox="0 0 22 26"><rect x="2" y="2" width="18" height="22" rx="1" fill="none" stroke="#f5bd4a" stroke-width="2.2"/><path d="M9.2 12.8 L6 16 L9.2 19.2 M12.8 12.8 L16 16 L12.8 19.2" fill="none" stroke="#f5bd4a" stroke-width="2.2"/></svg>
<div class="t" style="left:68.0px;top:1077.7px;font-size:24px;line-height:24px;color:#dcdee2;font-family:'Liberation Sans', sans-serif;font-weight:normal;letter-spacing:0.1px">about-5235bb820b4c3219.js</div>
<div class="t" style="left:465.0px;top:1077.7px;font-size:24px;line-height:24px;color:#dcdee2;font-family:'Liberation Sans', sans-serif;font-weight:normal;">200</div>
<div class="t" style="left:668.0px;top:1077.7px;font-size:24px;line-height:24px;color:#dcdee2;font-family:'Liberation Sans', sans-serif;font-weight:normal;">script</div>
<div class="t" style="left:871.0px;top:1077.7px;font-size:24px;line-height:24px;color:#dcdee2;font-family:'Liberation Sans', sans-serif;font-weight:normal;"><span style="text-decoration:underline;text-decoration-thickness:1.6px;text-underline-offset:2px">main-5d2b1bee6af9d</span><span style="letter-spacing:0.6px;margin-left:1px">...</span></div>
<div class="t" style="left:225.0px;width:1200px;text-align:right;top:1077.7px;font-size:24px;line-height:24px;color:#dcdee2;">2.2 kB</div>
<div class="t" style="left:634.0px;width:1200px;text-align:right;top:1077.7px;font-size:24px;line-height:24px;color:#dcdee2;">12 ms</div>
<svg class="r" style="left:33px;top:1118px" width="22" height="26" viewBox="0 0 22 26"><rect x="2" y="2" width="18" height="22" rx="1" fill="none" stroke="#f5bd4a" stroke-width="2.2"/><path d="M9.2 12.8 L6 16 L9.2 19.2 M12.8 12.8 L16 16 L12.8 19.2" fill="none" stroke="#f5bd4a" stroke-width="2.2"/></svg>
<div class="t" style="left:68.0px;top:1119.7px;font-size:24px;line-height:24px;color:#dcdee2;font-family:'Liberation Sans', sans-serif;font-weight:normal;letter-spacing:0.1px">projects-fa68610df3191321.js</div>
<div class="t" style="left:465.0px;top:1119.7px;font-size:24px;line-height:24px;color:#dcdee2;font-family:'Liberation Sans', sans-serif;font-weight:normal;">200</div>
<div class="t" style="left:668.0px;top:1119.7px;font-size:24px;line-height:24px;color:#dcdee2;font-family:'Liberation Sans', sans-serif;font-weight:normal;">script</div>
<div class="t" style="left:871.0px;top:1119.7px;font-size:24px;line-height:24px;color:#dcdee2;font-family:'Liberation Sans', sans-serif;font-weight:normal;"><span style="text-decoration:underline;text-decoration-thickness:1.6px;text-underline-offset:2px">main-5d2b1bee6af9d</span><span style="letter-spacing:0.6px;margin-left:1px">...</span></div>
<div class="t" style="left:225.0px;width:1200px;text-align:right;top:1119.7px;font-size:24px;line-height:24px;color:#dcdee2;">1.5 kB</div>
<div class="t" style="left:634.0px;width:1200px;text-align:right;top:1119.7px;font-size:24px;line-height:24px;color:#dcdee2;">12 ms</div>
<svg class="r" style="left:33px;top:1160px" width="22" height="26" viewBox="0 0 22 26"><rect x="2" y="2" width="18" height="22" rx="1" fill="none" stroke="#f5bd4a" stroke-width="2.2"/><path d="M9.2 12.8 L6 16 L9.2 19.2 M12.8 12.8 L16 16 L12.8 19.2" fill="none" stroke="#f5bd4a" stroke-width="2.2"/></svg>
<div class="t" style="left:68.0px;top:1161.7px;font-size:24px;line-height:24px;color:#dcdee2;font-family:'Liberation Sans', sans-serif;font-weight:normal;letter-spacing:0.1px">history-6b290f153295a4c9.js</div>
<div class="t" style="left:465.0px;top:1161.7px;font-size:24px;line-height:24px;color:#dcdee2;font-family:'Liberation Sans', sans-serif;font-weight:normal;">200</div>
<div class="t" style="left:668.0px;top:1161.7px;font-size:24px;line-height:24px;color:#dcdee2;font-family:'Liberation Sans', sans-serif;font-weight:normal;">script</div>
<div class="t" style="left:871.0px;top:1161.7px;font-size:24px;line-height:24px;color:#dcdee2;font-family:'Liberation Sans', sans-serif;font-weight:normal;"><span style="text-decoration:underline;text-decoration-thickness:1.6px;text-underline-offset:2px">main-5d2b1bee6af9d</span><span style="letter-spacing:0.6px;margin-left:1px">...</span></div>
<div class="t" style="left:225.0px;width:1200px;text-align:right;top:1161.7px;font-size:24px;line-height:24px;color:#dcdee2;">4.9 kB</div>
<div class="t" style="left:634.0px;width:1200px;text-align:right;top:1161.7px;font-size:24px;line-height:24px;color:#dcdee2;">10 ms</div>
<div class="r" style="left:1868px;top:452px;width:6px;height:13px;background:#ececec;"></div>
<div class="r" style="left:1876px;top:448px;width:6px;height:22px;background:#4aa3f0;"></div>
<div class="r" style="left:1868px;top:494px;width:6px;height:13px;background:#ececec;"></div>
<div class="r" style="left:1876px;top:490px;width:4.5px;height:22px;background:#4aa3f0;"></div>
<div class="r" style="left:1868px;top:536px;width:6px;height:13px;background:#ececec;"></div>
<div class="r" style="left:1876px;top:532px;width:4.5px;height:22px;background:#4aa3f0;"></div>
<div class="r" style="left:1868px;top:578px;width:6px;height:13px;background:#ececec;"></div>
<div class="r" style="left:1876px;top:574px;width:4.5px;height:22px;background:#4aa3f0;"></div>
<div class="r" style="left:1868px;top:620px;width:6px;height:13px;background:#ececec;"></div>
<div class="r" style="left:1876px;top:616px;width:4.5px;height:22px;background:#4aa3f0;"></div>
<div class="r" style="left:1868px;top:662px;width:6px;height:13px;background:#ececec;"></div>
<div class="r" style="left:1876px;top:658px;width:4.5px;height:22px;background:#4aa3f0;"></div>
<div class="r" style="left:1868px;top:704px;width:6px;height:13px;background:#ececec;"></div>
<div class="r" style="left:1876px;top:700px;width:4.5px;height:22px;background:#4aa3f0;"></div>
<div class="r" style="left:1868px;top:746px;width:6px;height:13px;background:#ececec;"></div>
<div class="r" style="left:1876px;top:742px;width:4.5px;height:22px;background:#4aa3f0;"></div>
<div class="r" style="left:1868px;top:788px;width:6px;height:13px;background:#ececec;"></div>
<div class="r" style="left:1876px;top:784px;width:4.5px;height:22px;background:#4aa3f0;"></div>
<div class="r" style="left:1868px;top:830px;width:6px;height:13px;background:#ececec;"></div>
<div class="r" style="left:1876px;top:826px;width:4.5px;height:22px;background:#4aa3f0;"></div>
<div class="r" style="left:1874px;top:874px;width:4px;height:10px;background:#ececec;"></div>
<div class="r" style="left:1878.5px;top:872px;width:1.5px;height:14px;background:#999;"></div>
<div class="r" style="left:1882px;top:866px;width:6px;height:26px;background:#4aa3f0;"></div>
<div class="r" style="left:1876.5px;top:916px;width:3.5px;height:10px;background:#ececec;"></div>
<div class="r" style="left:1881.5px;top:910px;width:4.5px;height:22px;background:#4aa3f0;"></div>
<div class="r" style="left:1876.5px;top:958px;width:3.5px;height:10px;background:#ececec;"></div>
<div class="r" style="left:1881.5px;top:952px;width:4.5px;height:22px;background:#4aa3f0;"></div>
<div class="r" style="left:1876.5px;top:1000px;width:3.5px;height:10px;background:#ececec;"></div>
<div class="r" style="left:1881.5px;top:994px;width:4.5px;height:22px;background:#4aa3f0;"></div>
<div class="r" style="left:1886.3px;top:1042px;width:4.5px;height:10.5px;background:#ececec;"></div>
<div class="r" style="left:1892px;top:1034px;width:1px;height:26px;background:#55aa55;"></div>
<div class="r" style="left:1893.3px;top:1036px;width:5px;height:22px;background:#4aa3f0;"></div>
<div class="r" style="left:1888px;top:1084.5px;width:4.5px;height:9.5px;background:#ececec;"></div>
<div class="r" style="left:1894px;top:1078px;width:4.5px;height:22px;background:#4aa3f0;"></div>
<div class="r" style="left:1888px;top:1126.5px;width:4.5px;height:9.5px;background:#ececec;"></div>
<div class="r" style="left:1894px;top:1120px;width:4.5px;height:22px;background:#4aa3f0;"></div>
<div class="r" style="left:1888px;top:1168.5px;width:4.5px;height:9.5px;background:#ececec;"></div>
<div class="r" style="left:1894px;top:1162px;width:4.5px;height:22px;background:#4aa3f0;"></div>
<div class="r" style="left:520px;top:616px;width:72px;height:36px;background:#29292c;border:1px solid #6f6f72;border-radius:2px"></div>
<div class="t" style="left:533.0px;top:622.7px;font-size:23px;line-height:23px;color:#ffffff;font-family:'Liberation Sans', sans-serif;font-weight:normal;">200</div>
<div class="r" style="left:17px;top:851px;width:1902px;height:51px;border:7px solid #e64a4a"></div>
<div class="t" style="left:975.0px;top:758.3px;font-size:89px;line-height:89px;color:#ff0a0a;font-family:'Liberation Serif', serif;font-weight:bold;-webkit-text-stroke:0;text-shadow:0 0 2px #141414,0 0 2px #141414">88682331 chunk</div>
<svg class="r" style="left:0;top:0" width="2014" height="440" viewBox="0 0 2014 440">
<!-- inspect -->
<path d="M44 51 H38 Q37 51 37 50 V30 Q37 29 38 29 H58 Q59 29 59 30 V36" fill="none" stroke="#a3a5a8" stroke-width="2.2"/>
<path d="M46 38 L61.5 42.5 L55 46 L50.5 53.5 Z" fill="#a3a5a8"/>
<path d="M54 46 L60.5 52.5" stroke="#a3a5a8" stroke-width="3" stroke-linecap="round"/>
<!-- device -->
<path d="M95.5 34 V26 Q95.5 25.3 96.5 25.3 H116 Q116.6 25.3 116.6 26 V54 Q116.6 54.7 116 54.7 H101" fill="none" stroke="#a3a5a8" stroke-width="2"/>
<rect x="89.3" y="35.1" width="11.3" height="19.6" rx="1" fill="none" stroke="#a3a5a8" stroke-width="2"/>
<rect x="89" y="34.5" width="12" height="2.8" fill="#a3a5a8"/>
<rect x="89" y="52.2" width="12" height="3" fill="#a3a5a8"/>
<!-- record -->
<circle cx="48" cy="94" r="14.5" fill="#f28b82" opacity="0.18"/>
<circle cx="48" cy="94" r="12.3" fill="#f28b82"/>
<!-- clear -->
<circle cx="105" cy="94.5" r="11.3" fill="none" stroke="#a3a5a8" stroke-width="3.2"/>
<path d="M97 86.5 L113 102.5" stroke="#a3a5a8" stroke-width="3.2"/>
<!-- funnel -->
<path d="M174 96 V106 H182 V96 Z" fill="#8c5a57"/>
<path d="M165.5 85.5 H190.5 V87.5 L182 97 V106.5 H174 V97 L165.5 87.5 Z" fill="none" stroke="#f28b82" stroke-width="3" stroke-linejoin="round"/>
<!-- search -->
<circle cx="230" cy="92" r="8.5" fill="none" stroke="#a3a5a8" stroke-width="3"/>
<path d="M236.5 99 L245.5 107.5" stroke="#a3a5a8" stroke-width="3.2" stroke-linecap="round"/>
<!-- dropdown -->
<path d="M880 88 H894.6 L887.3 99.3 Z" fill="#a3a5a8"/>
<!-- wifi -->
<path d="M924.5 87 A19 19 0 0 1 950.5 87" fill="none" stroke="#a3a5a8" stroke-width="3.2" stroke-linecap="round"/>
<path d="M929.5 93.3 A11.5 11.5 0 0 1 945 93.3" fill="none" stroke="#a3a5a8" stroke-width="3.2" stroke-linecap="round"/>
<path d="M932.5 97.2 A7 7 0 0 1 942 97.2 L937.3 101.5 Z" fill="#a3a5a8"/>
<g transform="translate(949.4 100.7)">
<circle r="5.2" fill="none" stroke="#a3a5a8" stroke-width="3"/>
<path d="M0 -7.2 V-4 M0 7.2 V4 M-7.2 0 H-4 M7.2 0 H4 M-5.1 -5.1 L-2.8 -2.8 M5.1 5.1 L2.8 2.8 M-5.1 5.1 L-2.8 2.8 M5.1 -5.1 L2.8 -2.8" stroke="#a3a5a8" stroke-width="2.6"/>
</g>
<!-- upload -->
<path d="M1011.9 81.8 L1022 93.8 H1016.1 V102.2 H1007.8 V93.8 H1001.8 Z" fill="#a3a5a8"/>
<rect x="1001.8" y="104" width="20.2" height="2" fill="#a3a5a8"/>
<!-- download -->
<path d="M1064 82 H1072.2 V90.3 H1078.1 L1068 102.2 L1057.9 90.3 H1064 Z" fill="#a3a5a8"/>
<rect x="1057.9" y="104" width="20.2" height="2" fill="#a3a5a8"/>
<!-- flask -->
<path d="M1655.8 29.8 H1667.9 V32 H1665.5 V36 L1671.2 47 Q1671.6 48.4 1670 48.4 H1654 Q1652.3 48.4 1652.7 47 L1658.3 36 V32 H1655.8 Z" fill="#a3a5a8"/>
<!-- >> -->
<path d="M1730.5 33 L1737 40 L1730.5 47 M1740 33 L1746.5 40 L1740 47" fill="none" stroke="#a3a5a8" stroke-width="2.6"/>
<!-- badge -->
<rect x="1781.2" y="23.4" width="69.5" height="34.2" rx="4" fill="none" stroke="#5f6368" stroke-width="2"/>
<path d="M1797 29 H1814.5 Q1817.4 29 1817.4 32 V44 Q1817.4 47 1814.5 47 H1800 L1795 51 V47.5 Q1794 47 1794 45 V32 Q1794 29 1797 29 Z" fill="#3d82f6"/>
<rect x="1799.5" y="33.5" width="14" height="2.6" fill="#202124"/>
<rect x="1799.5" y="39" width="9.5" height="2.6" fill="#202124"/>
<rect x="1864.3" y="24.2" width="2" height="31.6" fill="#4b4c50"/>
<!-- gear -->
<g transform="translate(1901.8 40)">
<circle r="7.6" fill="none" stroke="#a3a5a8" stroke-width="6.2"/>
<g fill="#a3a5a8">
<rect x="-4.2" y="-14" width="8.4" height="7" rx="0.8"/>
<rect x="-4.2" y="-14" width="8.4" height="7" rx="0.8" transform="rotate(60)"/>
<rect x="-4.2" y="-14" width="8.4" height="7" rx="0.8" transform="rotate(120)"/>
<rect x="-4.2" y="-14" width="8.4" height="7" rx="0.8" transform="rotate(180)"/>
<rect x="-4.2" y="-14" width="8.4" height="7" rx="0.8" transform="rotate(240)"/>
<rect x="-4.2" y="-14" width="8.4" height="7" rx="0.8" transform="rotate(300)"/>
</g>
</g>
<!-- dots -->
<circle cx="1959" cy="30.7" r="3.1" fill="#a3a5a8"/>
<circle cx="1959" cy="40.9" r="3.1" fill="#a3a5a8"/>
<circle cx="1959" cy="51.1" r="3.1" fill="#a3a5a8"/>
<!-- close -->
<path d="M2004.5 31 L2013 40 L2004.5 49 M2021.5 31 L2013 40 L2021.5 49" fill="none" stroke="#a3a5a8" stroke-width="3"/>
<!-- toolbar gear partial -->
<g transform="translate(2014 94)">
<circle r="7.6" fill="none" stroke="#a3a5a8" stroke-width="6.2"/>
<g fill="#a3a5a8">
<rect x="-4.2" y="-14" width="8.4" height="7" rx="0.8"/>
<rect x="-4.2" y="-14" width="8.4" height="7" rx="0.8" transform="rotate(60)"/>
<rect x="-4.2" y="-14" width="8.4" height="7" rx="0.8" transform="rotate(120)"/>
<rect x="-4.2" y="-14" width="8.4" height="7" rx="0.8" transform="rotate(180)"/>
<rect x="-4.2" y="-14" width="8.4" height="7" rx="0.8" transform="rotate(240)"/>
<rect x="-4.2" y="-14" width="8.4" height="7" rx="0.8" transform="rotate(300)"/>
</g>
</g>
<!-- sort triangle -->
<path d="M2008 415 L2016 403 L2024 415 Z" fill="#a3a5a8"/>
</svg>
<div class="t" style="left:1825.0px;top:28.7px;font-size:24px;line-height:24px;color:#b3b6ba;font-family:'Liberation Sans', sans-serif;font-weight:normal;">1</div>
</body></html>
